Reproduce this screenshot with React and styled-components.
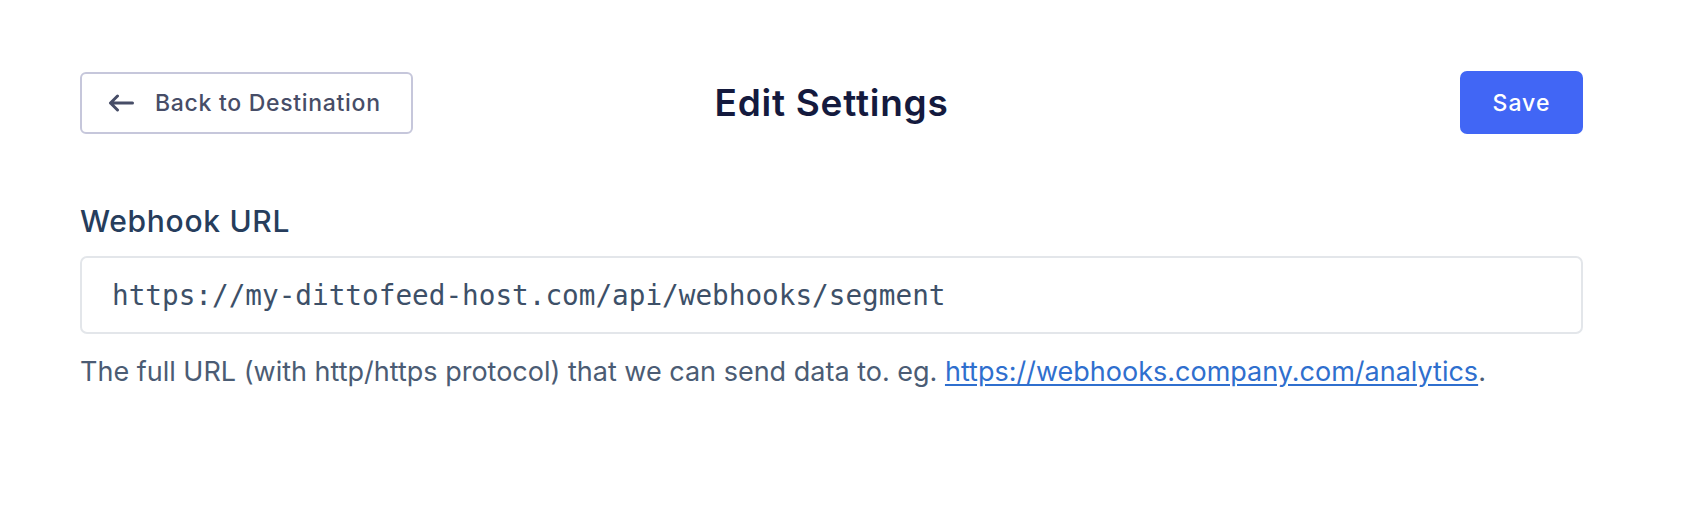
import React from "react";
import styled, { createGlobalStyle } from "styled-components";

const GlobalStyle = createGlobalStyle`
  html, body {
    margin: 0;
    padding: 0;
    background: #ffffff;
  }
  body {
    font-family: Inter, "Noto Sans", "Liberation Sans", sans-serif;
    -webkit-font-smoothing: antialiased;
  }
`;

const Page = styled.div`
  box-sizing: border-box;
  width: 1692px;
  padding: 71px 109px 0 80px;
`;

const Header = styled.div`
  display: grid;
  grid-template-columns: 1fr auto 1fr;
  align-items: center;
  height: 63px;
`;

const BackButton = styled.button`
  justify-self: start;
  box-sizing: border-box;
  height: 62px;
  width: 333px;
  display: flex;
  align-items: center;
  gap: 21px;
  padding: 0 0 0 26px;
  border: 2px solid #c6c7db;
  border-radius: 6px;
  background: #ffffff;
  color: #474d67;
  font-family: Inter, "Noto Sans", sans-serif;
  font-size: 23px;
  letter-spacing: 0.7px;
  font-weight: 500;
  cursor: pointer;
`;

const Title = styled.h1`
  margin: 0;
  font-size: 37px;
  font-weight: 600;
  color: #141a3e;
  letter-spacing: 0.75px;
`;

const SaveButton = styled.button`
  justify-self: end;
  box-sizing: border-box;
  height: 63px;
  width: 123px;
  border: none;
  border-radius: 7px;
  background: #4166f5;
  color: #ffffff;
  font-family: Inter, "Noto Sans", sans-serif;
  font-size: 23px;
  letter-spacing: 1px;
  font-weight: 500;
  cursor: pointer;
`;

const Field = styled.div`
  display: flex;
  flex-direction: column;
  margin-top: 69px;
`;

const Label = styled.label`
  font-size: 30px;
  line-height: 36px;
  letter-spacing: 0.7px;
  font-weight: 500;
  color: #263d5c;
`;

const InputBox = styled.input`
  box-sizing: border-box;
  margin-top: 17px;
  height: 78px;
  width: 100%;
  padding: 0 0 0 30px;
  border: 2px solid #e3e6ea;
  border-radius: 7px;
  background: #ffffff;
  color: #3d5068;
  font-family: "DejaVu Sans Mono", "Liberation Mono", monospace;
  font-size: 27.7px;
  outline: none;
`;

const Help = styled.p`
  margin: 21px 0 0;
  font-size: 27px;
  line-height: 34px;
  color: #4b5c74;
`;

const HelpLink = styled.a`
  color: #2f6fce;
  text-decoration: underline;
  text-underline-offset: 3px;
`;

function ArrowLeft() {
  return (
    <svg width="26" height="18" viewBox="0 0 26 18" fill="none">
      <path
        d="M24.5 9H2.5M9.5 2L2.5 9L9.5 16"
        stroke="#474d67"
        strokeWidth="3"
        strokeLinecap="round"
        strokeLinejoin="round"
      />
    </svg>
  );
}

export default function App() {
  return (
    <>
      <GlobalStyle />
      <Page>
        <Header>
          <BackButton>
            <ArrowLeft />
            Back to Destination
          </BackButton>
          <Title>Edit Settings</Title>
          <SaveButton>Save</SaveButton>
        </Header>
        <Field>
          <Label>Webhook URL</Label>
          <InputBox
            readOnly
            value="https://my-dittofeed-host.com/api/webhooks/segment"
          />
          <Help>
            The full URL (with http/https protocol) that we can send data to.
            eg. <HelpLink href="#">https://webhooks.company.com/analytics</HelpLink>.
          </Help>
        </Field>
      </Page>
    </>
  );
}
